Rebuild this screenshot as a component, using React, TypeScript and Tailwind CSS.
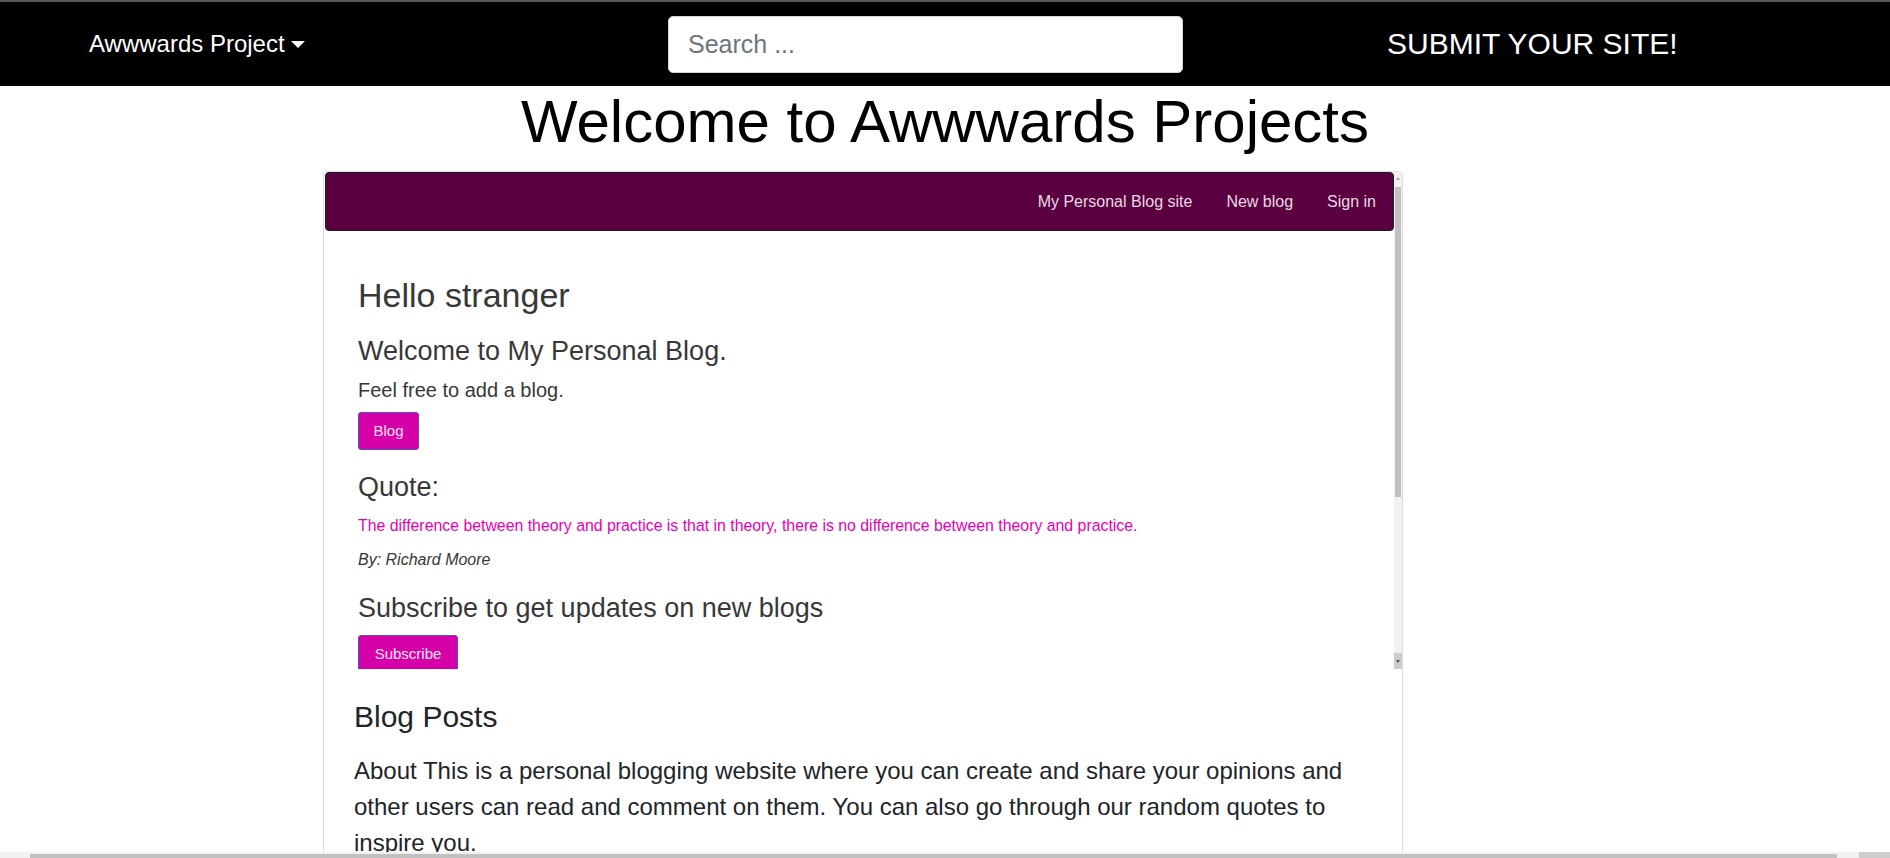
import React from "react";

function FrameScrollbar() {
    return (
        <div className="flex w-[8px] shrink-0 flex-col bg-[#f1f1f1]">
            <div className="flex h-[15px] items-start justify-center pt-[5px]">
                <span className="h-0 w-0 border-x-[2px] border-b-[3px] border-x-transparent border-b-[#a3a3a3]" />
            </div>
            <div className="mx-[1px] h-[310px] bg-[#c1c1c1]" />
            <div className="flex-1" />
            <div className="flex h-[16px] items-center justify-center bg-[#cdcdcd]">
                <span className="h-0 w-0 border-x-[2px] border-t-[3px] border-x-transparent border-t-[#505050]" />
            </div>
        </div>
    );
}

export default function App() {
    return (
        <div className="flex h-[858px] w-full flex-col overflow-hidden bg-white font-['Liberation_Sans',Arial,sans-serif]">
            <div className="h-[2px] shrink-0 bg-[#575757]" />

            <nav className="flex h-[84px] shrink-0 items-center bg-black text-white">
                <div className="flex w-[668px] items-center pl-[89px]">
                    <span className="text-[24px] leading-none">Awwwards Project</span>
                    <span className="ml-[6px] mt-[1px] h-0 w-0 border-x-[7px] border-t-[7px] border-x-transparent border-t-white" />
                </div>
                <input
                    type="text"
                    placeholder="Search ..."
                    className="h-[57px] w-[515px] rounded-[5px] border border-[#ced4da] bg-white px-[19px] text-[25px] text-[#495057] outline-none placeholder:text-[#6c757d]"
                />
                <a className="ml-[204px] text-[30px] leading-none text-white">SUBMIT YOUR SITE!</a>
            </nav>

            <main className="flex min-h-0 flex-1 flex-col">
                <h1 className="text-center text-[60px] leading-[72px] text-black">Welcome to Awwwards Projects</h1>

                <section className="mt-[13px] ml-[323px] flex min-h-0 w-[1080px] flex-1 flex-col overflow-hidden rounded-t-[4px] border-x border-t border-[#dedede]">
                    <div className="flex h-[497px] shrink-0">
                        <div className="min-w-0 flex-1 overflow-hidden">
                            <div className="ml-px flex h-[59px] items-center justify-end gap-[34px] rounded-[4px] border border-[#1c1c1c] bg-[#5a0040] pr-[17px] text-[16px] text-[#e8d9e3]">
                                <a>My Personal Blog site</a>
                                <a>New blog</a>
                                <a>Sign in</a>
                            </div>
                            <div className="pl-[34px] text-[#383838]">
                                <h2 className="mt-[44px] text-[34px] leading-[40px]">Hello stranger</h2>
                                <h3 className="mt-[20px] text-[27px] leading-[32px]">Welcome to My Personal Blog.</h3>
                                <p className="mt-[11px] text-[20px] leading-[24px]">Feel free to add a blog.</p>
                                <button className="mt-[10px] block h-[38px] w-[61px] rounded-[3px] border border-[#5b4fc4] bg-[#d600a8] text-[15px] text-[#fbe6f6]">
                                    Blog
                                </button>
                                <h3 className="mt-[21px] text-[27px] leading-[32px]">Quote:</h3>
                                <p className="mt-[13px] text-[15.85px] leading-[20px] text-[#e600b4]">
                                    The difference between theory and practice is that in theory, there is no difference between theory and practice.
                                </p>
                                <p className="mt-[14px] text-[16px] italic leading-[20px]">By: Richard Moore</p>
                                <h3 className="mt-[22px] text-[27px] leading-[32px]">Subscribe to get updates on new blogs</h3>
                                <button className="mt-[11px] block h-[38px] w-[100px] rounded-[3px] border border-[#5b4fc4] bg-[#d600a8] text-[15px] text-[#fbe6f6]">
                                    Subscribe
                                </button>
                            </div>
                        </div>
                        <FrameScrollbar />
                    </div>

                    <div className="pl-[30px] pr-[31px] text-[#212529]">
                        <h2 className="mt-[30px] text-[30px] leading-[36px]">Blog Posts</h2>
                        <p className="mt-[18px] text-[24px] leading-[36px]">
                            About This is a personal blogging website where you can create and share your opinions and other users can read and comment on them. You can also go through our random quotes to inspire you.
                        </p>
                    </div>
                </section>
            </main>

            <div className="flex h-[6px] shrink-0 bg-[#f1f1f1]">
                <div className="w-[30px]" />
                <div className="mt-[2px] flex-1 bg-[#c1c1c1]" />
                <div className="w-[22px]" />
                <div className="w-[31px] bg-[#cdcdcd]" />
            </div>
        </div>
    );
}
